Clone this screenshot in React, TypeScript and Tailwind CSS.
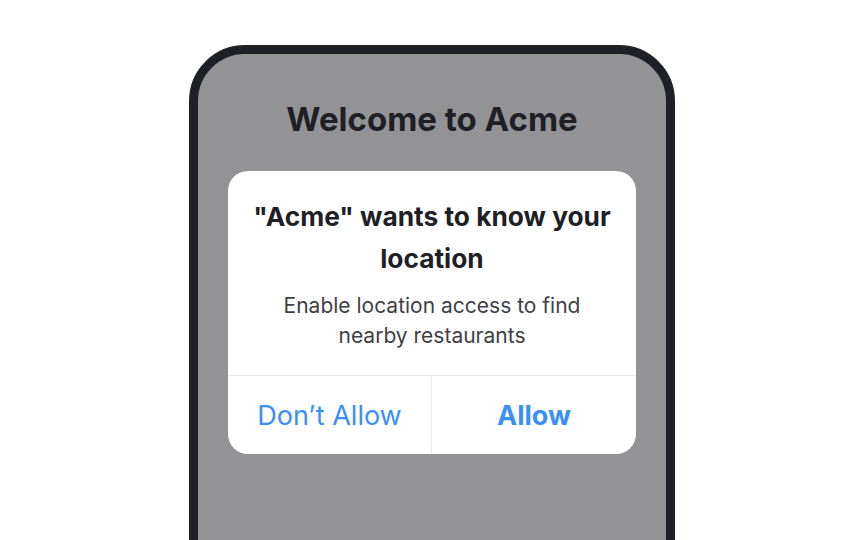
export default function App() {
  return (
    <div
      className="h-[540px] w-full overflow-hidden bg-white flex justify-center"
      style={{ fontFamily: "Inter, 'Noto Sans', sans-serif" }}
    >
      <div className="mt-[45px] w-[486px] h-[600px] shrink-0 rounded-[56px] border-[9px] border-[#1f1f26] bg-[#939396] flex flex-col items-center px-[30px]">
        <h1 className="mt-[45px] text-[33px] leading-[40px] font-bold text-[#1f1f26]">
          Welcome to Acme
        </h1>
        <div className="mt-[32px] w-full rounded-[20px] bg-white overflow-hidden">
          <div className="px-4 pt-[25px] pb-[24px] text-center">
            <h2 className="text-[26.3px] leading-[42px] font-bold text-[#1f1f26]">
              "Acme" wants to know your location
            </h2>
            <p className="mt-[11px] text-[21px] leading-[30px] text-[#3f3f46] px-7">
              Enable location access to find nearby restaurants
            </p>
          </div>
          <div className="grid grid-cols-2 border-t border-[#e8e8ea] h-[79px]">
            <button className="flex items-center justify-center pt-[3px] text-[27px] text-[#3b8ff6] border-r border-[#e8e8ea]">
              Don’t Allow
            </button>
            <button className="flex items-center justify-center pt-[3px] text-[27px] font-bold text-[#3b8ff6]">
              Allow
            </button>
          </div>
        </div>
      </div>
    </div>
  );
}
